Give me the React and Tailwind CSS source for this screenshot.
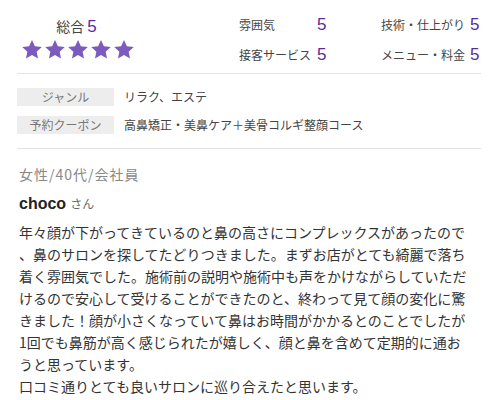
import React from 'react'

const font = { fontFamily: '"Noto Sans CJK JP", "Liberation Sans", sans-serif' }

const Star = () => (
  <svg width="22" height="21" viewBox="0 0 24 23">
    <path d="M12 1l3.2 6.9 7.5.9-5.6 5.1 1.5 7.4L12 17.6l-6.6 3.7 1.5-7.4L1.3 8.8l7.5-.9L12 1z" fill="#7b5cbe" />
  </svg>
)

const ratings = [
  { label: '雰囲気', value: 5 },
  { label: '技術・仕上がり', value: 5 },
  { label: '接客サービス', value: 5 },
  { label: 'メニュー・料金', value: 5 },
]

const bodyLines = [
  '年々顔が下がってきているのと鼻の高さにコンプレックスがあったので',
  '、鼻のサロンを探してたどりつきました。まずお店がとても綺麗で落ち',
  '着く雰囲気でした。施術前の説明や施術中も声をかけながらしていただ',
  'けるので安心して受けることができたのと、終わって見て顔の変化に驚',
  'きました！顔が小さくなっていて鼻はお時間がかかるとのことでしたが',
  '1回でも鼻筋が高く感じられたが嬉しく、顔と鼻を含めて定期的に通お',
  'うと思っています。',
  '口コミ通りとても良いサロンに巡り合えたと思います。',
]

function App() {
  return (
    <div className="w-[500px] h-[400px] bg-white overflow-hidden text-[#333]" style={font}>
      <div className="ml-[17px] w-[464px]">
        {/* ratings header */}
        <div className="flex h-[74px] border-b border-[#e3e3e3]">
          <div className="w-[120px] flex flex-col items-center pt-[16px]">
            <div className="flex items-baseline text-[14px] leading-[20px] text-[#444]">
              総合<span className="ml-[3px] text-[17px] text-[#5a2ca0]" style={{ fontFamily: '"Liberation Sans", sans-serif' }}>5</span>
            </div>
            <div className="flex gap-[1px] mt-[2px] ml-[2px]">
              <Star /><Star /><Star /><Star /><Star />
            </div>
          </div>
          <div className="ml-[103px] pt-[13px] grid grid-cols-[142px_100px]">
            {ratings.map((r) => (
              <div key={r.label} className="flex items-center h-[24px]">
                <span className={r.label.length > 6 ? 'w-[89px] text-[12px] text-[#444]' : 'w-[78px] text-[12px] text-[#444]'}>{r.label}</span>
                <span className="text-[17px] text-[#5a2ca0]" style={{ fontFamily: '"Liberation Sans", sans-serif' }}>{r.value}</span>
              </div>
            ))}
          </div>
        </div>

        {/* genre / coupon */}
        <div className="pt-[14px] pb-[14px] border-b border-[#e3e3e3] flex flex-col gap-[10px]">
          <div className="flex items-center">
            <div className="w-[97px] h-[18px] bg-[#ededed] text-[#777] text-[12px] leading-[18px] text-center">ジャンル</div>
            <div className="ml-[10px] text-[12px] text-[#444]">リラク、エステ</div>
          </div>
          <div className="flex items-center">
            <div className="w-[97px] h-[18px] bg-[#ededed] text-[#777] text-[12px] leading-[18px] text-center">予約クーポン</div>
            <div className="ml-[10px] text-[12px] text-[#444]">高鼻矯正・美鼻ケア＋美骨コルギ整顔コース</div>
          </div>
        </div>

        {/* review */}
        <div className="pl-[2px]">
          <div className="mt-[15px] text-[14px] leading-[20px] tracking-[1px] text-[#888]">女性/40代/会社員</div>
          <div className="mt-[9px] leading-[22px] flex items-baseline">
            <span className="font-bold text-[16px] text-[#222]" style={{ fontFamily: '"Liberation Sans", sans-serif' }}>choco</span>
            <span className="ml-[4px] text-[12px] text-[#666]">さん</span>
          </div>
          <div className="mt-[6px] text-[14px] leading-[22px] text-[#333]">
            {bodyLines.map((line, i) => (
              <div key={i} className="whitespace-nowrap">{line}</div>
            ))}
          </div>
        </div>
      </div>
    </div>
  )
}

export default App
